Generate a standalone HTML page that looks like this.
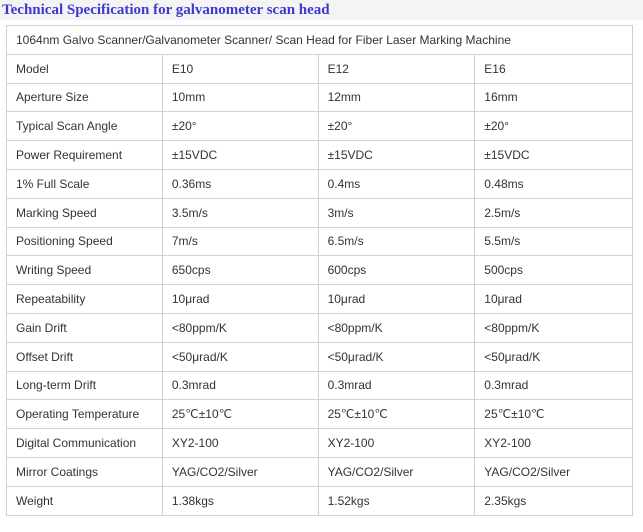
<!DOCTYPE html>
<html><head><meta charset="utf-8"><style>
html,body{margin:0;padding:0;background:#fff;width:643px;height:532px;overflow:hidden}
.top{position:absolute;left:0;top:0;width:643px;height:20px;background:#f4f4f4}
h1{position:absolute;left:2px;top:2px;margin:0;font:bold 15px "Liberation Serif",serif;color:#3a3ad0;white-space:nowrap}
table{position:absolute;left:6px;top:25px;border-collapse:collapse;width:627px;font:12px "Liberation Sans",sans-serif;color:#333}
td{border:1px solid #d0d0d0;height:28.8px;padding:0 0 0 9px;box-sizing:border-box;white-space:nowrap}
col.a{width:156px}col.b{width:156px}col.c{width:157px}col.d{width:158px}
</style></head><body>
<div class="top"></div>
<h1>Technical Specification for galvanometer scan head</h1>
<table>
<colgroup><col class="a"><col class="b"><col class="c"><col class="d"></colgroup>
<tr><td colspan="4">1064nm Galvo Scanner/Galvanometer Scanner/ Scan Head for Fiber Laser Marking Machine</td></tr>
<tr><td>Model</td><td>E10</td><td>E12</td><td>E16</td></tr>
<tr><td>Aperture Size</td><td>10mm</td><td>12mm</td><td>16mm</td></tr>
<tr><td>Typical Scan Angle</td><td>±20°</td><td>±20°</td><td>±20°</td></tr>
<tr><td>Power Requirement</td><td>±15VDC</td><td>±15VDC</td><td>±15VDC</td></tr>
<tr><td>1% Full Scale</td><td>0.36ms</td><td>0.4ms</td><td>0.48ms</td></tr>
<tr><td>Marking Speed</td><td>3.5m/s</td><td>3m/s</td><td>2.5m/s</td></tr>
<tr><td>Positioning Speed</td><td>7m/s</td><td>6.5m/s</td><td>5.5m/s</td></tr>
<tr><td>Writing Speed</td><td>650cps</td><td>600cps</td><td>500cps</td></tr>
<tr><td>Repeatability</td><td>10μrad</td><td>10μrad</td><td>10μrad</td></tr>
<tr><td>Gain Drift</td><td>&lt;80ppm/K</td><td>&lt;80ppm/K</td><td>&lt;80ppm/K</td></tr>
<tr><td>Offset Drift</td><td>&lt;50μrad/K</td><td>&lt;50μrad/K</td><td>&lt;50μrad/K</td></tr>
<tr><td>Long-term Drift</td><td>0.3mrad</td><td>0.3mrad</td><td>0.3mrad</td></tr>
<tr><td>Operating Temperature</td><td>25℃±10℃</td><td>25℃±10℃</td><td>25℃±10℃</td></tr>
<tr><td>Digital Communication</td><td>XY2-100</td><td>XY2-100</td><td>XY2-100</td></tr>
<tr><td>Mirror Coatings</td><td>YAG/CO2/Silver</td><td>YAG/CO2/Silver</td><td>YAG/CO2/Silver</td></tr>
<tr><td>Weight</td><td>1.38kgs</td><td>1.52kgs</td><td>2.35kgs</td></tr>
</table>
</body></html>
